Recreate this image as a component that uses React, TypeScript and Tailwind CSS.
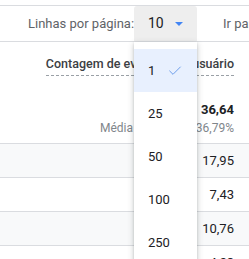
import React from 'react';
import { Check } from 'lucide-react';

const rows = [
  { value: '17,95', shaded: true },
  { value: '7,43', shaded: false },
  { value: '10,76', shaded: true },
  { value: '4,23', shaded: false },
];

const options = ['1', '25', '50', '100', '250'];

export default function App() {
  return (
    <div className="relative w-[249px] h-[259px] overflow-hidden bg-white font-['Roboto',sans-serif] text-[#202124]">
      {/* pagination bar */}
      <div className="mt-[5px] h-[37px] flex items-stretch border-y border-[#dadce0]">
        <div className="w-[134px] flex items-center pl-[28px] text-[13px] text-[#5f6368] whitespace-nowrap">
          Linhas por página:
        </div>
        <div className="w-[63px] bg-[#eeeeee] flex items-center pl-[14px] gap-[11px] rounded-t-[3px]">
          <span className="text-[14px] text-[#202124]">10</span>
          <svg width="8" height="4" viewBox="0 0 8 4">
            <path d="M0 0h8L4 4z" fill="#4285f4" />
          </svg>
        </div>
        <div className="flex-1 flex items-center pl-[26px] text-[13px] text-[#5f6368] whitespace-nowrap overflow-hidden">
          Ir para a página
        </div>
      </div>

      {/* column header + totals */}
      <div className="h-[102px] border-b border-[#dadce0] flex flex-col items-end pr-[15px]">
        <div className="mt-[14px] text-[12.5px] font-medium text-[#3c4043] whitespace-nowrap border-b border-dashed border-[#9aa0a6] leading-[16px] pb-[3px]">
          Contagem de eventos por usuário
        </div>
        <div className="mt-[26px] text-[13px] font-bold leading-[16px]">36,64</div>
        <div className="mt-[3px] text-[12px] text-[#80868b] leading-[14px] whitespace-nowrap">
          Média da métrica 36,79%
        </div>
      </div>

      {/* rows */}
      {rows.map((r) => (
        <div
          key={r.value}
          className={`h-[34px] border-b border-[#dadce0] flex items-center justify-end pr-[15px] text-[13px] ${
            r.shaded ? 'bg-[#f8f9fa]' : 'bg-white'
          }`}
        >
          {r.value}
        </div>
      ))}

      {/* rows-per-page menu */}
      <div className="absolute left-[134px] top-[42px] w-[63px] h-[240px] bg-white pt-[7px] shadow-[0_2px_6px_rgba(60,64,67,0.3),0_1px_2px_rgba(60,64,67,0.15)]">
        {options.map((o, i) => (
          <div
            key={o}
            className={`h-[43px] flex items-center pl-[14px] gap-[12px] text-[13px] ${
              i === 0 ? 'bg-[#e8f0fe]' : ''
            }`}
          >
            <span>{o}</span>
            {i === 0 && <Check size={16} strokeWidth={1.5} color="#6d9eeb" />}
          </div>
        ))}
      </div>
    </div>
  );
}
